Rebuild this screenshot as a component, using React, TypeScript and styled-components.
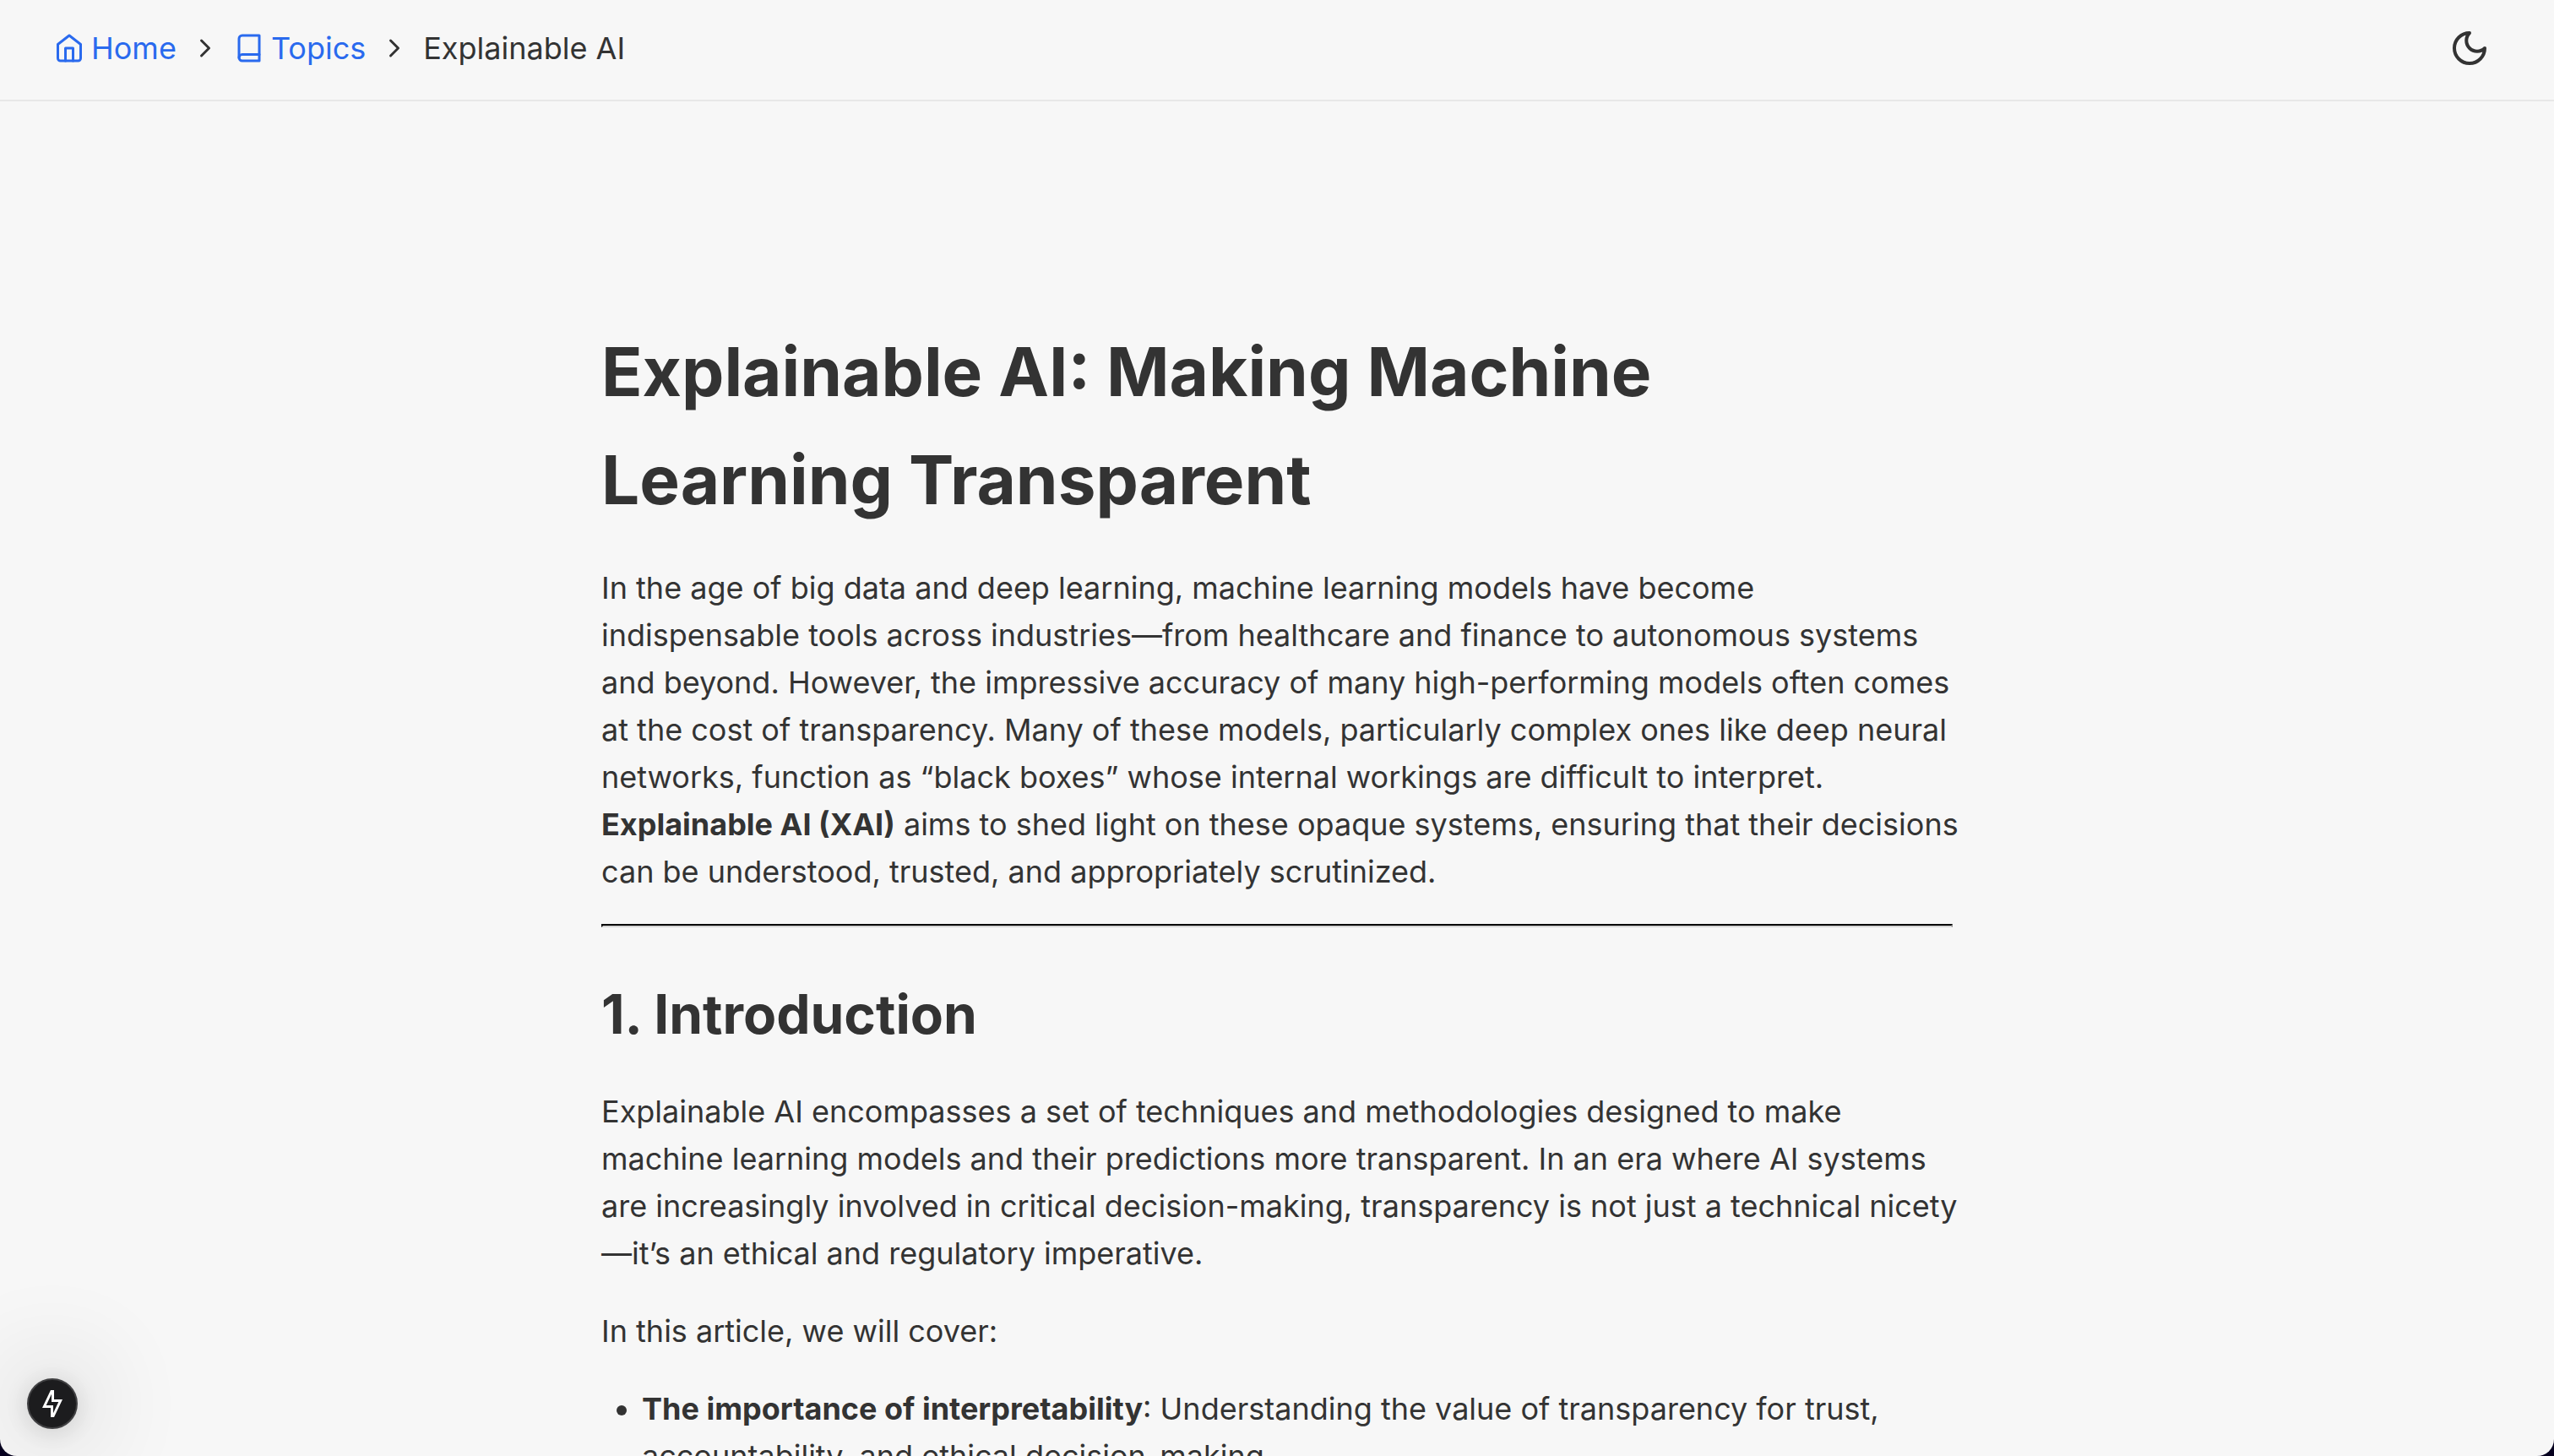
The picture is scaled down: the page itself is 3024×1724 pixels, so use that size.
import React from "react";
import styled, { createGlobalStyle } from "styled-components";

const GlobalStyle = createGlobalStyle`
  *, *::before, *::after { box-sizing: border-box; }
  html { background: #06001f; }
  body {
    margin: 0;
    font-family: Inter, "Liberation Sans", sans-serif;
    font-size: 36px;
    line-height: 56px;
    color: #333333;
    -webkit-font-smoothing: antialiased;
  }
`;

const Window = styled.div`
  height: 100vh;
  overflow: hidden;
  background: #f7f7f7;
  border-radius: 0 0 20px 20px;
`;

const Header = styled.header`
  display: flex;
  align-items: center;
  justify-content: space-between;
  height: 120px;
  padding: 0 64px 4px;
  border-bottom: 2px solid #e8e8e8;
`;

const Crumbs = styled.ol`
  display: flex;
  align-items: center;
  gap: 16px;
  margin: 0;
  padding: 0;
  list-style: none;
`;

const Crumb = styled.li`
  display: flex;
  align-items: center;
`;

const CrumbLink = styled.a`
  display: flex;
  align-items: center;
  gap: 8px;
  color: #2a6aee;
  text-decoration: none;
`;

const Icon = styled.svg<{ $size: number }>`
  display: block;
  width: ${(p) => p.$size}px;
  height: ${(p) => p.$size}px;
  fill: none;
  stroke: currentColor;
  stroke-width: 2;
  stroke-linecap: round;
  stroke-linejoin: round;
`;

const BoltIcon = styled.svg`
  display: block;
  width: 24px;
  height: 32px;
  fill: currentColor;
  fill-rule: evenodd;
`;

const ThemeButton = styled.button`
  padding: 12px;
  border: 0;
  background: transparent;
  color: inherit;
  cursor: pointer;
`;

const Article = styled.article`
  width: 100%;
  max-width: 1600px;
  margin: 0 auto;
  padding-top: 256px;
`;

const Title = styled.h1`
  margin: 0 0 36px;
  font-size: 80px;
  line-height: 128px;
  font-weight: 700;
`;

const Heading = styled.h2`
  margin: 52px 0 36px;
  font-size: 64px;
  line-height: 102px;
  font-weight: 700;
`;

const Paragraph = styled.p`
  margin: 0 -12px 36px 0;
`;

const Lead = styled(Paragraph)`
  margin-bottom: 34px;
`;

const Rule = styled.hr`
  height: 4px;
  margin: 0;
  border: 2px inset #333333;
  border-bottom-color: #d4d4d4;
`;

const List = styled.ul`
  margin: 0;
  padding-left: 48px;
`;

const DevBadge = styled.button`
  position: fixed;
  left: 32px;
  bottom: 32px;
  display: grid;
  place-items: center;
  width: 60px;
  height: 60px;
  padding: 0;
  border: 2px solid #414143;
  border-radius: 50%;
  background: #1c1c1e;
  color: #ffffff;
  box-shadow: 0 4px 32px rgba(0, 0, 0, 0.14), 0 0 120px 20px rgba(0, 0, 0, 0.14);
`;

const Chevron = () => (
  <Crumb aria-hidden="true">
    <Icon $size={36} viewBox="0 0 24 24"><path d="m9 18 6-6-6-6" /></Icon>
  </Crumb>
);

export default function App() {
  return (
    <>
      <GlobalStyle />
      <Window>
        <Header>
          <nav aria-label="Breadcrumb">
            <Crumbs>
              <Crumb>
                <CrumbLink href="#home">
                  <Icon $size={36} viewBox="0 0 24 24">
                    <path d="m3 9 9-7 9 7v11a2 2 0 0 1-2 2H5a2 2 0 0 1-2-2z" />
                    <path d="M9 22V12h6v10" />
                  </Icon>
                  Home
                </CrumbLink>
              </Crumb>
              <Chevron />
              <Crumb>
                <CrumbLink href="#topics">
                  <Icon $size={36} viewBox="0 0 24 24">
                    <path d="M4 19.5A2.5 2.5 0 0 1 6.5 17H20" />
                    <path d="M6.5 2H20v20H6.5A2.5 2.5 0 0 1 4 19.5v-15A2.5 2.5 0 0 1 6.5 2z" />
                  </Icon>
                  Topics
                </CrumbLink>
              </Crumb>
              <Chevron />
              <Crumb aria-current="page">Explainable AI</Crumb>
            </Crumbs>
          </nav>
          <ThemeButton type="button" aria-label="Toggle theme">
            <Icon $size={48} viewBox="0 0 24 24"><path d="M12 3a6 6 0 0 0 9 9 9 9 0 1 1-9-9Z" /></Icon>
          </ThemeButton>
        </Header>
        <Article>
          <Title>Explainable AI: Making Machine Learning Transparent</Title>
          <Lead>
            In the age of big data and deep learning, machine learning models have become
            <br />
            indispensable tools across industries—from healthcare and finance to autonomous
            systems and beyond. However, the impressive accuracy of many high-performing models
            often comes at the cost of transparency. Many of these models, particularly complex
            ones like deep neural networks, function as “black boxes” whose internal workings are
            difficult to interpret. <strong>Explainable AI (XAI)</strong> aims to shed light on
            these opaque systems, ensuring that their decisions can be understood, trusted, and
            appropriately scrutinized.
          </Lead>
          <Rule />
          <Heading>1. Introduction</Heading>
          <Paragraph>
            Explainable AI encompasses a set of techniques and methodologies designed to make
            machine learning models and their predictions more transparent. In an era where AI
            systems are increasingly involved in critical decision-making, transparency is not
            just a technical nicety—it’s an ethical and regulatory imperative.
          </Paragraph>
          <Paragraph>In this article, we will cover:</Paragraph>
          <List>
            <li>
              <strong>The importance of interpretability</strong>: Understanding the value of
              transparency for trust, accountability, and ethical decision-making.
            </li>
          </List>
        </Article>
      </Window>
      <DevBadge type="button" aria-label="Static route">
        <BoltIcon viewBox="0 0 24 32">
          <path d="M10 0h4v11h10L14 32h-4V21H0zM11 4.8V14h8.3L13 27.2V18H4.7z" />
        </BoltIcon>
      </DevBadge>
    </>
  );
}
